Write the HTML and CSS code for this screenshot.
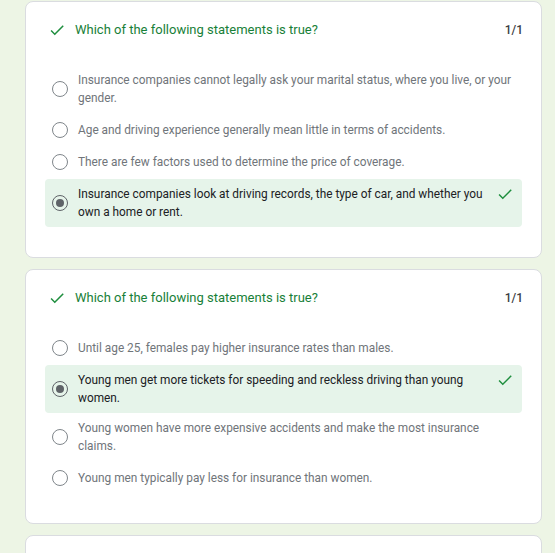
FILE: index.html
```html
<!DOCTYPE html>
<html>
<head>
<meta charset="utf-8">
<link rel="stylesheet" href="styles.css">
</head>
<body>
<div class="page">
  <div class="card">
    <div class="head">
      <svg class="check" viewBox="0 0 24 24"><path d="M9 16.17L4.83 12l-1.42 1.41L9 19 21 7l-1.41-1.41z"/></svg>
      <div class="title">Which of the following statements is true?</div>
      <div class="score">1/1</div>
    </div>
    <div class="opts">
      <div class="opt"><span class="radio"></span><span class="txt">Insurance companies cannot legally ask your marital status, where you live, or your gender.</span></div>
      <div class="opt"><span class="radio"></span><span class="txt">Age and driving experience generally mean little in terms of accidents.</span></div>
      <div class="opt"><span class="radio"></span><span class="txt">There are few factors used to determine the price of coverage.</span></div>
      <div class="opt sel"><span class="radio on"></span><span class="txt">Insurance companies look at driving records, the type of car, and whether you own a home or rent.</span><svg class="check mark" viewBox="0 0 24 24"><path d="M9 16.17L4.83 12l-1.42 1.41L9 19 21 7l-1.41-1.41z"/></svg></div>
    </div>
  </div>
  <div class="card">
    <div class="head">
      <svg class="check" viewBox="0 0 24 24"><path d="M9 16.17L4.83 12l-1.42 1.41L9 19 21 7l-1.41-1.41z"/></svg>
      <div class="title">Which of the following statements is true?</div>
      <div class="score">1/1</div>
    </div>
    <div class="opts">
      <div class="opt"><span class="radio"></span><span class="txt">Until age 25, females pay higher insurance rates than males.</span></div>
      <div class="opt sel"><span class="radio on"></span><span class="txt">Young men get more tickets for speeding and reckless driving than young women.</span><svg class="check mark" viewBox="0 0 24 24"><path d="M9 16.17L4.83 12l-1.42 1.41L9 19 21 7l-1.41-1.41z"/></svg></div>
      <div class="opt"><span class="radio"></span><span class="txt">Young women have more expensive accidents and make the most insurance claims.</span></div>
      <div class="opt"><span class="radio"></span><span class="txt">Young men typically pay less for insurance than women.</span></div>
    </div>
  </div>
  <div class="card last"></div>
</div>
</body>
</html>
```

FILE: styles.css
```css
html, body {
  margin: 0;
  padding: 0;
  background: #edf5e5;
  font-family: Roboto, "Liberation Sans", sans-serif;
}
.page {
  padding: 1px 0 0 25px;
  width: 517px;
}
.card {
  box-sizing: border-box;
  background: #fff;
  border: 1px solid #dadce0;
  border-radius: 8px;
  padding: 19px 19px 30px 19px;
  margin-bottom: 11px;
}
.card.last {
  height: 40px;
}
.head {
  display: flex;
  align-items: center;
  height: 18px;
  padding-left: 3px;
}
.check {
  width: 18px;
  height: 18px;
  fill: #1e8e3e;
  flex: none;
}
.title {
  flex: 1;
  margin-left: 9px;
  font-size: 13px;
  color: #188038;
  line-height: 18px;
}
.score {
  font-size: 12px;
  font-weight: 500;
  color: #3c4043;
  margin-right: -1px;
}
.opts {
  margin-top: 26px;
  display: flex;
  flex-direction: column;
  gap: 2px;
}
.opt {
  display: flex;
  align-items: center;
  padding: 6px 8px 6px 7px;
  border-radius: 4px;
}
.opt.sel {
  background: #e6f4ea;
}
.sel + .opt {
  margin-top: -2px;
}
.radio {
  box-sizing: border-box;
  flex: none;
  width: 16px;
  height: 16px;
  border: 1.5px solid #80868b;
  border-radius: 50%;
  display: flex;
  align-items: center;
  justify-content: center;
}
.radio.on {
  border-color: #5f6368;
}
.radio.on::after {
  content: "";
  width: 8px;
  height: 8px;
  border-radius: 50%;
  background: #5f6368;
}
.txt {
  flex: 1;
  margin-left: 10px;
  font-size: 11.85px;
  line-height: 18px;
  color: #70757a;
}
.sel .txt {
  color: #202124;
}
.mark {
  margin-left: 8px;
  align-self: flex-start;
}
```
